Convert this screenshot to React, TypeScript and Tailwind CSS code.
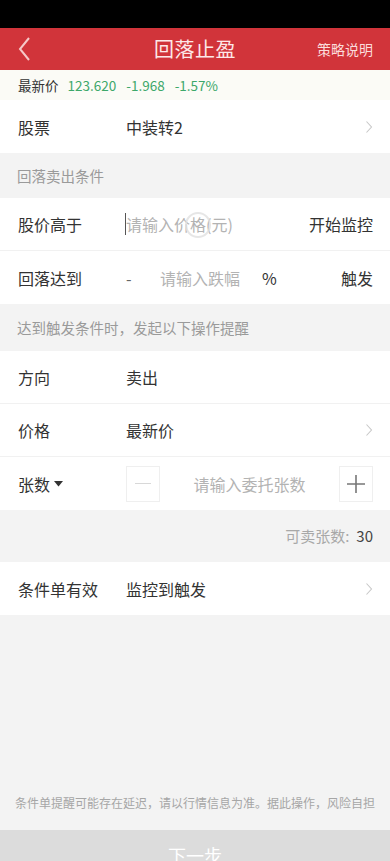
import React from "react";

const font = { fontFamily: '"Noto Sans CJK SC", "Noto Sans", sans-serif' };

function Chevron() {
  return (
    <svg width="8" height="14" viewBox="0 0 8 14" className="shrink-0">
      <path d="M1.5 1.5 L6.5 7 L1.5 12.5" fill="none" stroke="#c8c8c8" strokeWidth="1.1" />
    </svg>
  );
}

function Row({ children, border = true }: { children: React.ReactNode; border?: boolean }) {
  return (
    <div className={`h-[53px] flex items-center pl-[18px] pr-[17px] bg-white ${border ? "border-b border-[#f1f1f1]" : ""}`}>
      {children}
    </div>
  );
}

function Label({ children }: { children: React.ReactNode }) {
  return <div className="w-[108px] shrink-0 text-[16px] text-[#333]">{children}</div>;
}

export default function App() {
  return (
    <div className="w-[390px] h-[880px] flex flex-col bg-[#f3f3f3] overflow-hidden" style={font}>
      <div className="h-[28px] bg-black shrink-0" />
      <div className="h-[42px] bg-[#d1343a] flex items-center relative shrink-0">
        <div className="pl-[17px] w-[80px]">
          <svg width="14" height="26" viewBox="0 0 14 26">
            <path d="M12 2 L3 13 L12 24" fill="none" stroke="#f6c8c8" strokeWidth="2" />
          </svg>
        </div>
        <div className="flex-1 text-center text-[20px] text-[#fde8e8] tracking-[0.5px]">回落止盈</div>
        <div className="w-[80px] text-right pr-[17px] text-[14px] text-[#fbdcdc]">策略说明</div>
      </div>
      <div className="h-[30px] bg-[#fbfbf6] flex items-center pl-[18px] text-[13.5px] shrink-0">
        <span className="text-[#333]">最新价</span>
        <span className="text-[#3da86a] ml-[9px]">123.620</span>
        <span className="text-[#3da86a] ml-[10px]">-1.968</span>
        <span className="text-[#3da86a] ml-[10px]">-1.57%</span>
      </div>
      <Row border={false}>
        <Label>股票</Label>
        <div className="flex-1 text-[16px] text-[#333]">中装转2</div>
        <Chevron />
      </Row>
      <div className="h-[45px] flex items-center pl-[17px] text-[14.5px] text-[#9a9a9a]">回落卖出条件</div>
      <Row>
        <Label>股价高于</Label>
        <div className="flex-1 flex items-center relative">
          <div className="w-px h-[22px] bg-[#555] -ml-px" />
          <span className="text-[16px] text-[#b3b3b3]">请输入价格(元)</span>
          <div className="absolute left-[59px] top-[0px] w-[26px] h-[26px] rounded-full border-2 border-[#e0e0e0] opacity-80" />
        </div>
        <div className="text-[16px] text-[#333]">开始监控</div>
      </Row>
      <Row border={false}>
        <Label>回落达到</Label>
        <div className="flex-1 flex items-center text-[16px]">
          <span className="text-[#666] w-[34px]">-</span>
          <span className="text-[#b3b3b3]">请输入跌幅</span>
          <span className="text-[#333] ml-[22px]">%</span>
        </div>
        <div className="text-[16px] text-[#333]">触发</div>
      </Row>
      <div className="h-[47px] flex items-center pl-[17px] text-[14.5px] text-[#9a9a9a]">达到触发条件时，发起以下操作提醒</div>
      <Row>
        <Label>方向</Label>
        <div className="flex-1 text-[16px] text-[#333]">卖出</div>
      </Row>
      <Row>
        <Label>价格</Label>
        <div className="flex-1 text-[16px] text-[#333]">最新价</div>
        <Chevron />
      </Row>
      <Row border={false}>
        <div className="w-[108px] shrink-0 flex items-center text-[16px] text-[#333]">
          张数
          <svg width="9" height="6" viewBox="0 0 9 6" className="ml-[4px]">
            <path d="M0 0 H9 L4.5 5.5 Z" fill="#333" />
          </svg>
        </div>
        <div className="flex-1 flex items-center">
          <div className="w-[34px] h-[36px] border border-[#efefef] flex items-center justify-center">
            <div className="w-[16px] h-[1.5px] bg-[#d8d8d8]" />
          </div>
          <div className="flex-1 text-center text-[16px] text-[#b3b3b3]">请输入委托张数</div>
          <div className="w-[34px] h-[36px] border border-[#efefef] flex items-center justify-center">
            <svg width="20" height="20" viewBox="0 0 20 20">
              <path d="M10 1 V19 M1 10 H19" stroke="#777" strokeWidth="1.6" />
            </svg>
          </div>
        </div>
      </Row>
      <div className="h-[52px] flex items-center justify-end pr-[17px] text-[15px]">
        <span className="text-[#a8a8a8]">可卖张数:</span>
        <span className="text-[#444] ml-[7px]">30</span>
      </div>
      <Row border={false}>
        <Label>条件单有效</Label>
        <div className="flex-1 text-[16px] text-[#333]">监控到触发</div>
        <Chevron />
      </Row>
      <div className="flex-1" />
      <div className="pb-[18px] text-center text-[12px] text-[#a6a6a6] whitespace-nowrap">
        条件单提醒可能存在延迟，请以行情信息为准。据此操作，风险自担
      </div>
      <div className="h-[50px] bg-[#dcdcdc] flex items-center justify-center text-[18px] text-white shrink-0">下一步</div>
    </div>
  );
}
